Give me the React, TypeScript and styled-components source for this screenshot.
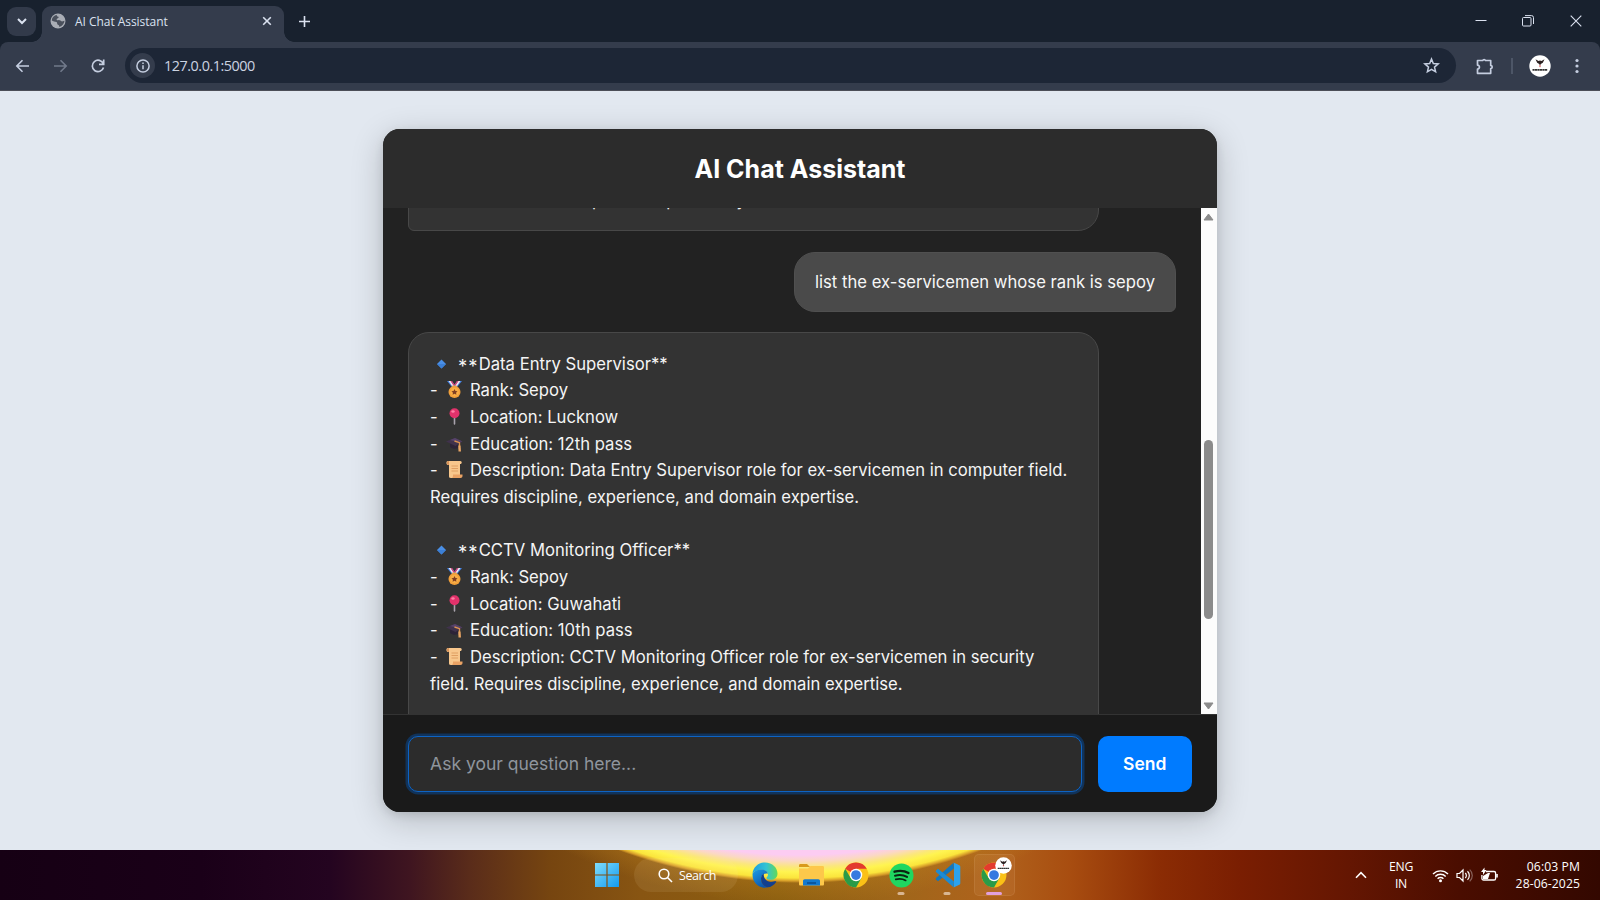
import React from "react";
import styled, { createGlobalStyle } from "styled-components";

const Global = createGlobalStyle`
  * { box-sizing: border-box; }
  body { margin: 0; overflow: hidden; font-family: Inter, sans-serif; }
`;

const ui = `"Open Sans", "Noto Sans", sans-serif`;

const Screen = styled.div`
  width: 1600px;
  height: 900px;
  display: flex;
  flex-direction: column;
  overflow: hidden;
  background: #e2e8f0;
`;

/* ---------- browser chrome ---------- */

const BrowserFrame = styled.header`
  flex: none;
  background: #18212e;
`;

const TabStrip = styled.div`
  height: 42px;
  display: flex;
  align-items: flex-start;
  color: #dbe2f0;
  padding: 6px 0 0 7px;
`;

const TabSearch = styled.div`
  width: 29px;
  height: 29px;
  margin-top: 1px;
  border-radius: 9px;
  background: #323a4a;
  display: grid;
  place-items: center;
`;

const Tab = styled.div`
  position: relative;
  width: 242px;
  height: 36px;
  margin-left: 6px;
  padding: 0 12px 6px 8px;
  border-radius: 9px 9px 0 0;
  background: #343c4c;
  display: flex;
  align-items: center;
  &::before, &::after {
    content: "";
    position: absolute;
    bottom: 0;
    width: 10px;
    height: 10px;
  }
  &::before {
    left: -10px;
    background: radial-gradient(circle at 0 0, transparent 9.5px, #343c4c 10px);
  }
  &::after {
    right: -10px;
    background: radial-gradient(circle at 100% 0, transparent 9.5px, #343c4c 10px);
  }
`;

const TabTitle = styled.span`
  flex: 1;
  margin-left: 9px;
  font: 12px ${ui};
  letter-spacing: -0.04px;
  white-space: nowrap;
`;

const NewTab = styled.div`
  margin: 9px 0 0 14px;
  height: 12px;
  display: flex;
`;

const WindowButtons = styled.div`
  margin-left: auto;
  padding: 8.5px 18px 0 0;
  display: flex;
  gap: 35.6px;
  align-items: center;
`;

const Toolbar = styled.div`
  height: 49px;
  display: flex;
  align-items: center;
  padding: 0 21px 1px 15px;
  border-radius: 8px 8px 0 0;
  background: #343c4c;
  border-bottom: 1px solid #4b4e57;
  color: #c5cee0;
`;

const ToolIcon = styled.div<{ $gap?: number; $dim?: boolean }>`
  display: flex;
  margin-left: ${(p) => p.$gap ?? 0}px;
  opacity: ${(p) => (p.$dim ? 0.42 : 1)};
`;

const Omnibox = styled.div`
  flex: 1;
  height: 35px;
  margin-left: 19px;
  border-radius: 18px;
  background: #1d2636;
  display: flex;
  align-items: center;
  padding: 0 16px 0 5px;
`;

const SiteInfo = styled.div`
  width: 25px;
  height: 25px;
  border-radius: 50%;
  background: #343c4c;
  display: grid;
  place-items: center;
`;

const Url = styled.span`
  flex: 1;
  margin-left: 9px;
  font: 14.4px ${ui};
  letter-spacing: -0.47px;
  color: #ccd3e1;
`;

const Divider = styled.i`
  width: 2px;
  height: 16px;
  margin-left: 17px;
  background: #4d5667;
`;

/* ---------- chat ---------- */

const Page = styled.main`
  flex: 1;
  min-height: 0;
  display: flex;
  justify-content: center;
  align-items: flex-start;
  padding-top: 38px;
`;

const Card = styled.section`
  width: 833.4px;
  height: 683.3px;
  border-radius: 16.7px;
  overflow: hidden;
  display: flex;
  flex-direction: column;
  background: #222;
  box-shadow: 0 8px 33px rgba(0, 0, 0, 0.2), 0 3px 10px rgba(0, 0, 0, 0.1);
`;

const CardHeader = styled.header`
  height: 79px;
  flex: none;
  background: #2c2c2c;
  color: #fff;
  display: grid;
  place-items: center;
  h1 {
    margin: 0;
    font: 700 25px/30px Inter, sans-serif;
  }
`;

const Body = styled.div`
  height: 505.5px;
  flex: none;
  display: flex;
`;

const Messages = styled.div`
  flex: 1;
  overflow: hidden;
  display: flex;
  flex-direction: column;
  justify-content: flex-start;
  padding: 0 25px;
`;

const Bubble = styled.div<{ $user?: boolean }>`
  flex: none;
  align-self: ${(p) => (p.$user ? "flex-end" : "flex-start")};
  width: ${(p) => (p.$user ? "382px" : "691px")};
  padding: ${(p) => (p.$user ? "16.2px 20.3px 15.2px" : "17.6px 20.8px")};
  border: 1px solid ${(p) => (p.$user ? "#505050" : "#484848")};
  border-radius: ${(p) => (p.$user ? "21px 21px 6px 21px" : "21px 21px 21px 6px")};
  background: ${(p) => (p.$user ? "#4a4a4a" : "#333")};
  color: ${(p) => (p.$user ? "#f7f7f7" : "#f5f5f5")};
  font-size: 16.67px;
  line-height: 26.67px;
  white-space: nowrap;
  margin-bottom: 20.5px;
`;

const PreviousBubble = styled(Bubble)`
  margin-top: -70px;
  height: 93px;
  padding-top: 48px;
`;

const Line = styled.div`
  height: 26.67px;
`;

const Stars = styled.span`
  display: inline-block;
  width: 20.6px;
  font-size: 18.5px;
  line-height: 20px;
  letter-spacing: 1px;
  transform: translateY(2.5px);
`;

const Emoji = styled.svg<{ $lead?: boolean }>`
  display: inline-block;
  width: 17px;
  height: 17px;
  vertical-align: -2px;
  margin: ${(p) => (p.$lead ? "0 8.5px 0 2.5px" : "0 7.4px 0 3.1px")};
`;

const Scrollbar = styled.div`
  width: 16px;
  background: #fcfcfc;
  display: flex;
  flex-direction: column;
  align-items: center;
  padding: 5px 0 4px;
`;

const Thumb = styled.div`
  width: 9px;
  height: 179px;
  margin: 219px 0 auto;
  border-radius: 5px;
  background: #8b8b8b;
`;

const Composer = styled.form`
  flex: 1;
  display: flex;
  gap: 15.7px;
  padding: 21px 25px 20.8px;
  background: #1a1a1a;
  border-top: 1px solid #333;
`;

const Field = styled.input`
  flex: 1;
  min-width: 0;
  padding: 0 20.8px;
  border: 1px solid #0d63c4;
  border-radius: 10px;
  outline: none;
  background: #2c2c2c;
  box-shadow: 0 0 0 2.5px #11335a;
  color: #fff;
  font: 17.5px Inter, sans-serif;
  &::placeholder { color: #8f959d; opacity: 1; }
`;

const Send = styled.button`
  width: 94px;
  border: 0;
  border-radius: 10px;
  background: #007bff;
  color: #fff;
  font: 600 17.5px Inter, sans-serif;
`;

/* ---------- taskbar ---------- */

const Taskbar = styled.footer`
  height: 50px;
  flex: none;
  display: flex;
  align-items: center;
  padding: 0 20px 0 595px;
  color: #fff;
  font-family: ${ui};
  background:
    radial-gradient(circle at 800px -490px,
      #fbc8f8 0, #fcccf2 495px, #fbd8c4 501px, #fbe77c 507px, #fff450 512px, #fbe53c 518px, #d9a02a 521px, rgba(190, 130, 30, 0.3) 523px, rgba(180, 110, 20, 0) 545px),
    linear-gradient(90deg,
      #160014 0, #1a0018 200px, #240420 330px, #3f1520 410px, #5a2c1a 470px, #764510 550px, #885512 640px, #8c5f10 780px, #a0661a 900px, #b0621c 1000px, #a84d10 1070px, #8b2c04 1160px, #7a1e02 1240px, #641602 1350px, #4a0d00 1460px, #330800 1600px);
`;

const SearchPill = styled.div`
  width: 104px;
  height: 34px;
  margin: 0 13px 0 15px;
  border-radius: 17px;
  background: rgba(255, 235, 190, 0.09);
  display: flex;
  align-items: center;
  gap: 6px;
  padding-left: 24px;
  font-size: 12.5px;
  letter-spacing: -0.45px;
`;

const AppSlot = styled.div<{ $active?: boolean; $gap?: number }>`
  position: relative;
  width: ${(p) => (p.$active ? 41 : 26)}px;
  height: 42px;
  margin-left: ${(p) => p.$gap ?? 0}px;
  border-radius: 5px;
  border: 1px solid ${(p) => (p.$active ? "rgba(255,220,180,.1)" : "transparent")};
  background: ${(p) => (p.$active ? "rgba(255,210,170,.08)" : "none")};
  display: grid;
  place-items: center;
`;

const Running = styled.i<{ $active?: boolean }>`
  position: absolute;
  bottom: 0;
  left: 50%;
  transform: translateX(-50%);
  width: ${(p) => (p.$active ? 16 : 7)}px;
  height: 3px;
  border-radius: 2px;
  background: ${(p) => (p.$active ? "#e2a0dc" : "#d9b692")};
`;

const ProfileBadge = styled.div`
  position: absolute;
  left: 20px;
  top: 2px;
  display: flex;
`;

const Tray = styled.div`
  margin-left: auto;
  display: flex;
  align-items: center;
  font-size: 12.2px;
  line-height: 17px;
  letter-spacing: -0.25px;
`;

const Language = styled.div`
  width: 26px;
  margin: 0 18px 0 21px;
  text-align: center;
`;

const Clock = styled.div`
  width: 82px;
  text-align: right;
  letter-spacing: 0.08px;
`;

const TrayIcons = styled.div`
  display: flex;
  align-items: center;
  gap: 7px;
`;

/* ---------- emoji drawings ---------- */

const Diamond = () => (
  <Emoji $lead viewBox="0 0 17 17" aria-hidden>
    <path d="M8.500 4.500 13 9 8.500 13.500 4 9Z" fill="#4a8fe6" />
    <path d="M4 9h9l-4.500 4.500Z" fill="#3b7fd6" />
  </Emoji>
);
const Medal = () => (
  <Emoji viewBox="0 0 17 17" aria-hidden>
    <path d="M1 0h5l4.500 6.500H6.200Z" fill="#3f7fe0" />
    <path d="M16 0h-5L6.500 6.500h4.300Z" fill="#3f7fe0" />
    <path d="M2.600 0h2L9 6.500H7Z" fill="#f3e8ee" />
    <path d="M14.400 0h-2L8 6.500h2Z" fill="#f3e8ee" />
    <path d="M4.600 0H6l4 6H8.500ZM12.400 0H11L7 6h1.500Z" fill="#e0416f" />
    <rect x="5.800" y="4.600" width="5.400" height="2.200" rx=".8" fill="#d9a060" />
    <circle cx="8.500" cy="11" r="6" fill="#f2a03a" />
    <circle cx="8.500" cy="11" r="4.300" fill="#f9ae45" />
    <path d="m8.500 8 .95 1.950 2.100.3-1.500 1.500.35 2.100-1.900-1-1.900 1 .35-2.100-1.500-1.500 2.100-.3Z" fill="#7f3f22" />
  </Emoji>
);
const Pin = () => (
  <Emoji viewBox="0 0 17 17" aria-hidden>
    <path d="M7.700 9h1.600v7l-.8 1-.8-1Z" fill="#a9a3ad" />
    <circle cx="8.500" cy="5.300" r="5" fill="#e2326b" />
    <ellipse cx="7" cy="3.500" rx="1.700" ry="1.300" fill="#ff7fa6" />
  </Emoji>
);
const Cap = () => (
  <Emoji viewBox="0 0 17 17" aria-hidden>
    <path d="M4 6.500v5.500c2 2 6 2.300 8 1V7Z" fill="#2c2337" />
    <path d="M0 6.500 9 3l7.500 3.500L9.500 11Z" fill="#40324c" />
    <path d="M4 5 9 3l7.500 3.500-5.500.5Z" fill="#57436a" />
    <path d="m8.500 6 5 1.700V14" fill="none" stroke="#dc9350" strokeWidth="1.400" />
    <path d="M12.300 10.500h2.200l.5 6h-2.500Z" fill="#e8a565" />
  </Emoji>
);
const Scroll = () => (
  <Emoji viewBox="0 0 17 17" aria-hidden>
    <path d="M2 0h12c2 0 2.300 2 1 3h-1v14H5c-2 0-2-1-2-2V4H1.500C0 3 0 0 2 0Z" fill="#f8c78c" />
    <path d="M1 1.500C1 .5 2 0 3 0v4H1.800C1 3.500 1 2.500 1 1.500Z" fill="#d9935a" />
    <path d="M7 13.500h9.500V15c0 1.200-.8 2-2 2H6c1-.8 1-2 1-3.500Z" fill="#e9a264" />
    <path d="M5.500 5h6.500M5.500 7.500h6.500M5.500 10h6.500" stroke="#dd9b5d" strokeWidth=".9" />
  </Emoji>
);

/* ---------- app icons ---------- */

const outline = { fill: "none", stroke: "currentColor" } as const;

const ChromeLogo = () => (
  <svg width="26" height="26" viewBox="0 0 48 48">
    <circle cx="24" cy="24" r="23" fill="#fbc116" />
    <path d="M24 24 4.080 12.500A23 23 0 0 1 43.920 12.500H24Z" fill="#e33b2e" />
    <path d="M4.080 12.500A23 23 0 0 0 24 47l10-17.250L24 24 14 29.750Z" fill="#2a9b48" />
    <circle cx="24" cy="24" r="11.500" fill="#fff" />
    <circle cx="24" cy="24" r="9" fill="#3579e0" />
  </svg>
);

const Profile = ({ size }: { size: number }) => (
  <svg width={size} height={size} viewBox="0 0 22 22">
    <circle cx="11" cy="11" r="10.700" fill="#fff" />
    <path d="M6.500 4.300 9.500 6l1.500-.6L12.500 6l3-1.700-1.700 3.500L11.800 9l-.8 1.500L10.200 9l-2-1.200Z" fill="#2b2020" />
    <path d="m10 10.500 1 2 1-2Z" fill="#d23b3b" />
    <path d="M3.500 14.800h15" stroke="#333" strokeWidth="1.700" strokeDasharray="2.200 .3" />
  </svg>
);

const EdgeLogo = () => (
  <svg width="26" height="26" viewBox="0 0 26 26">
    <defs>
      <linearGradient id="edgeTop" x1="0" y1="0.500" x2="1" y2="0.500">
        <stop offset="0" stopColor="#1b9de2" />
        <stop offset=".55" stopColor="#33c3d3" />
        <stop offset="1" stopColor="#62d957" />
      </linearGradient>
      <linearGradient id="edgeSide" x1="0" y1="0" x2="0.600" y2="1">
        <stop offset="0" stopColor="#1d9de6" />
        <stop offset="1" stopColor="#0c56ad" />
      </linearGradient>
    </defs>
    <path d="M.5 12C1 5 6.500.5 13 .5c7.500 0 12.500 5.500 12.500 11 0 4-3 6.300-6.500 6.300-2.800 0-4.500-1-4.500-2 0-.8 1.500-1.200 1.500-3.300 0-2.500-2.500-4.800-6.500-4.800C5 7.700 1.500 9.500.5 12Z" fill="url(#edgeTop)" />
    <path d="M.5 12.500C1 9.800 4.500 7.500 9.500 7.500c3.500 0 6 1.800 6.400 4.200C12.500 10.500 9 13 9 17c0 4 3 7.500 7 8.200C8 27.500.5 21.500.5 12.500Z" fill="url(#edgeSide)" />
    <path d="M9 16.500c0-2.300 1.200-4 2.800-5-.6 4 2.200 8.500 7.200 8.500 2.200 0 3.800-.8 4.700-.7.6 0 .6.500.3 1-2 3-5.500 5.200-8.500 5C12 24.800 9 21 9 16.500Z" fill="#123f8f" />
  </svg>
);

const FirstJob = () => (
  <>
    <Line><Diamond /><Stars>**</Stars>Data Entry Supervisor**</Line>
    <Line>- <Medal />Rank: Sepoy</Line>
    <Line>- <Pin />Location: Lucknow</Line>
    <Line>- <Cap />Education: 12th pass</Line>
    <Line>- <Scroll />Description: Data Entry Supervisor role for ex-servicemen in computer field.</Line>
    <Line>Requires discipline, experience, and domain expertise.</Line>
  </>
);

const SecondJob = () => (
  <>
    <Line><Diamond /><Stars>**</Stars>CCTV Monitoring Officer**</Line>
    <Line>- <Medal />Rank: Sepoy</Line>
    <Line>- <Pin />Location: Guwahati</Line>
    <Line>- <Cap />Education: 10th pass</Line>
    <Line>- <Scroll />Description: CCTV Monitoring Officer role for ex-servicemen in security</Line>
    <Line>field. Requires discipline, experience, and domain expertise.</Line>
  </>
);

export default function App() {
  return (
    <Screen>
      <Global />
      <BrowserFrame>
        <TabStrip>
          <TabSearch>
            <svg width="10" height="7" viewBox="0 0 10 7" {...outline} strokeWidth="2"><path d="m1 1 4 4 4-4" /></svg>
          </TabSearch>
          <Tab>
            <svg width="16" height="16" viewBox="0 0 16 16">
              <circle cx="8" cy="8" r="7.500" fill="#a9adb5" />
              <path d="M7.200 1.800C6 3 7 3.500 8.500 3.800c.8 1-1 1.600-1.800 2.200-.3 1.200.8 1.500 1.500 1.200 1.800-.4 2.200.8 3.800 1.200l2.500-.6c-.3 3-2 5-5.200 6.300 0-1.600-.3-2-1.500-2.300-1-.8-.4-2-1.300-2.700C5 8.400 3 8.600 1.800 7.500c.2-3 2-5.200 5.400-5.700Z" fill="#4a505c" />
              <path d="M10 2.500c2 .6 3.500 2.300 3.900 4.500l-2-.3C11 6 10.200 5 10.800 4Z" fill="#a9adb5" />
            </svg>
            <TabTitle>AI Chat Assistant</TabTitle>
            <svg width="10" height="10" viewBox="0 0 10 10" {...outline} strokeWidth="1.600"><path d="m1.200 1.200 7.600 7.600M8.800 1.200 1.200 8.800" /></svg>
          </Tab>
          <NewTab>
            <svg width="13" height="13" viewBox="0 0 13 13" {...outline} strokeWidth="1.600"><path d="M6.500 1v11M1 6.500h11" /></svg>
          </NewTab>
          <WindowButtons>
            <svg width="12" height="12" viewBox="0 0 12 12" {...outline} strokeWidth="1"><path d="M.5 5.500h11" /></svg>
            <svg width="12" height="12" viewBox="0 0 12 12" {...outline} strokeWidth="1"><rect x=".5" y="2.500" width="8.500" height="8.500" rx="1" /><path d="M3 .6h6.500a2 2 0 0 1 2 2V9" /></svg>
            <svg width="12" height="12" viewBox="0 0 12 12" {...outline} strokeWidth="1.100"><path d="m.7.7 10.600 10.600M11.300.7.7 11.300" /></svg>
          </WindowButtons>
        </TabStrip>
        <Toolbar>
          <ToolIcon>
            <svg width="15" height="14" viewBox="0 0 15 14" {...outline} strokeWidth="1.600"><path d="M14 7H2M7.500 1.300 1.800 7l5.700 5.700" /></svg>
          </ToolIcon>
          <ToolIcon $gap={23} $dim>
            <svg width="15" height="14" viewBox="0 0 15 14" {...outline} strokeWidth="1.600"><path d="M1 7h12M7.500 1.300 13.200 7l-5.700 5.700" /></svg>
          </ToolIcon>
          <ToolIcon $gap={22}>
            <svg width="16" height="16" viewBox="0 0 16 16" {...outline} strokeWidth="1.700"><path d="M13.300 5.800A5.700 5.700 0 1 0 13.500 9.500M13.700 1.500v4.800H9" /></svg>
          </ToolIcon>
          <Omnibox>
            <SiteInfo>
              <svg width="14" height="14" viewBox="0 0 14 14" {...outline} strokeWidth="1.500"><circle cx="7" cy="7" r="6.100" /><path d="M7 6.300v4M7 3.600v1.500" /></svg>
            </SiteInfo>
            <Url>127.0.0.1:5000</Url>
            <svg width="17" height="17" viewBox="0 0 17 17" {...outline} strokeWidth="1.500"><path d="m8.500 2 1.800 4.500 4.900.4-3.700 3.200 1.100 4.700-4.100-2.500-4.100 2.500 1.100-4.700L1.800 6.900l4.900-.4Z" /></svg>
          </Omnibox>
          <ToolIcon $gap={20}>
            <svg width="18" height="18" viewBox="0 0 18 18" {...outline} strokeWidth="1.700"><path d="M1.500 3.500h5.200a1.500 1.500 0 0 1 2.800 0h5.200v5a1.500 1.500 0 0 1 0 3v4.800H1.500v-4.200c2.600 0 2.600-4 0-4Z" strokeLinejoin="round" /></svg>
          </ToolIcon>
          <Divider />
          <ToolIcon $gap={16}><Profile size={22} /></ToolIcon>
          <ToolIcon $gap={24}>
            <svg width="4" height="16" viewBox="0 0 4 16" fill="currentColor"><circle cx="2" cy="2.500" r="1.600" /><circle cx="2" cy="8" r="1.600" /><circle cx="2" cy="13.500" r="1.600" /></svg>
          </ToolIcon>
        </Toolbar>
      </BrowserFrame>

      <Page>
        <Card>
          <CardHeader><h1>AI Chat Assistant</h1></CardHeader>
          <Body>
            <Messages>
              <PreviousBubble>
                <Line>Tell me about which post or a place as you want.</Line>
              </PreviousBubble>
              <Bubble $user>list the ex-servicemen whose rank is sepoy</Bubble>
              <Bubble>
                <FirstJob />
                <Line />
                <SecondJob />
                <Line />
              </Bubble>
            </Messages>
            <Scrollbar>
              <svg width="11" height="8" viewBox="0 0 11 8"><path d="M5.500 1 10 7H1Z" fill="#8b8b8b" stroke="#8b8b8b" strokeLinejoin="round" /></svg>
              <Thumb />
              <svg width="11" height="8" viewBox="0 0 11 8"><path d="M5.500 7 10 1H1Z" fill="#8b8b8b" stroke="#8b8b8b" strokeLinejoin="round" /></svg>
            </Scrollbar>
          </Body>
          <Composer>
            <Field placeholder="Ask your question here..." />
            <Send type="button">Send</Send>
          </Composer>
        </Card>
      </Page>

      <Taskbar>
        <svg width="24" height="24" viewBox="0 0 24 24">
          <defs>
            <linearGradient id="win" x1="0" y1="0" x2="1" y2="1"><stop offset="0" stopColor="#7fdcfb" /><stop offset="1" stopColor="#139af0" /></linearGradient>
          </defs>
          <path d="M0 0h11.400v11.400H0ZM12.600 0H24v11.400H12.600ZM0 12.600h11.400V24H0ZM12.600 12.600H24V24H12.600Z" fill="url(#win)" />
        </svg>
        <SearchPill>
          <svg width="15" height="15" viewBox="0 0 15 15" {...outline} strokeWidth="1.600"><circle cx="6" cy="6" r="4.800" /><path d="m9.500 9.500 4.500 4.500" /></svg>
          Search
        </SearchPill>
        <AppSlot><EdgeLogo /></AppSlot>
        <AppSlot $gap={19.5}>
          <svg width="26" height="24" viewBox="0 0 26 24">
            <path d="M1 2.500C1 1.500 1.600 1 2.500 1H9l3 3H1Z" fill="#d99a1b" />
            <path d="M1 5.500h9L12.500 3H24.500c1 0 1.500.5 1.500 1.500V21c0 1-.5 1.500-1.500 1.500h-22C1.500 22.500 1 22 1 21Z" fill="#fdc84a" />
            <path d="M5 22.500V18c0-1 .7-1.700 1.700-1.700h13.600c1 0 1.700.7 1.700 1.700v4.500Z" fill="#1379cf" />
            <path d="M9 20h9" stroke="#0a4f94" strokeWidth="1.600" />
          </svg>
        </AppSlot>
        <AppSlot $gap={19.5}><ChromeLogo /></AppSlot>
        <AppSlot $gap={20}>
          <svg width="25" height="25" viewBox="0 0 25 25" fill="none" stroke="#0a2412" strokeLinecap="round">
            <circle cx="12.500" cy="12.500" r="12" fill="#1fd760" stroke="none" />
            <path d="M5.500 8.700c5-1.400 10-1 14 1.300" strokeWidth="2.300" />
            <path d="M6 12.700c4.300-1.200 8.500-.8 12 1.200" strokeWidth="2" />
            <path d="M6.700 16.400c3.600-.9 7-.6 10 1.100" strokeWidth="1.600" />
          </svg>
          <Running />
        </AppSlot>
        <AppSlot $gap={20}>
          <svg width="26" height="26" viewBox="0 0 26 26">
            <path d="M19 6.500 3 19.200 1 17.500c-.4-.4-.4-1 0-1.400L18.500.8Z" fill="#1277bd" />
            <path d="M19 19.500 3 6.800 1 8.500c-.4.4-.4 1 0 1.400l17.500 15.300Z" fill="#1c8bd4" />
            <path d="M18.500.6 24.300 3.300c.6.300 1 .8 1 1.500v16.400c0 .7-.4 1.200-1 1.500l-5.800 2.700c.4-.5.500-1 .5-1.700V2.300c0-.7-.1-1.200-.5-1.700Z" fill="#2ba2ee" />
          </svg>
          <Running />
        </AppSlot>
        <AppSlot $gap={13.5} $active>
          <ChromeLogo />
          <ProfileBadge><Profile size={17} /></ProfileBadge>
          <Running $active />
        </AppSlot>
        <Tray>
          <svg width="12" height="8" viewBox="0 0 12 8" {...outline} strokeWidth="1.600"><path d="m1 6.700 5-5 5 5" /></svg>
          <Language>ENG<br />IN</Language>
          <TrayIcons>
            <svg width="17" height="15" viewBox="0 0 17 15" {...outline} strokeWidth="1.400"><path d="M1 6a10.500 10.500 0 0 1 15 0M3.300 8.500a7.200 7.200 0 0 1 10.400 0M5.600 10.800a4 4 0 0 1 5.800 0" /><circle cx="8.500" cy="12.700" r="1.500" fill="currentColor" stroke="none" /></svg>
            <svg width="17" height="15" viewBox="0 0 17 15" {...outline} strokeWidth="1.200"><path d="M1 5.500h2.500L7 2v11L3.500 9.500H1ZM9.300 5a3.500 3.500 0 0 1 0 5M11.500 3.200a6 6 0 0 1 0 8.600" /><path d="M13.700 1.600a8 8 0 0 1 0 11.800" opacity=".35" /></svg>
            <svg width="18" height="16" viewBox="0 0 18 16" {...outline} strokeWidth="1.300"><path d="M6 4.500h8a1.600 1.600 0 0 1 1.600 1.600v5.300a1.600 1.600 0 0 1-1.600 1.600H3.500a1.600 1.600 0 0 1-1.600-1.600V8" /><path d="M3 12V9l5-3h2l-2 6Z" fill="currentColor" stroke="none" /><path d="M4.500.5v2.500h2L3 8V5H1Z" fill="currentColor" stroke="none" /><path d="M17 7v3.500" strokeWidth="1.600" /></svg>
          </TrayIcons>
          <Clock>06:03 PM<br />28-06-2025</Clock>
        </Tray>
      </Taskbar>
    </Screen>
  );
}
